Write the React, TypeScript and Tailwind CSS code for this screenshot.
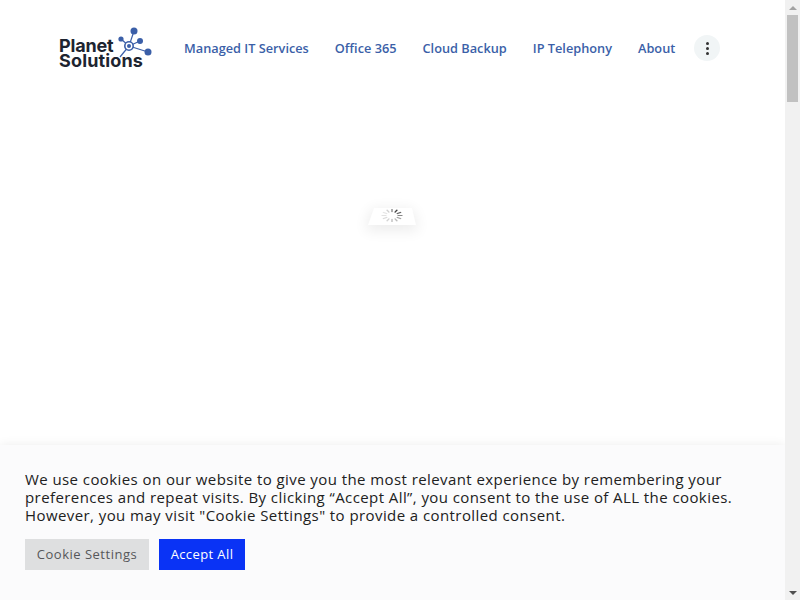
const navItems = ["Managed IT Services", "Office 365", "Cloud Backup", "IP Telephony", "About"];

const Logo = () => (
  <div className="relative h-[44px] w-[96px] font-['Inter',sans-serif] text-[#1d2430]">
    <div className="absolute left-0 top-[13px] text-[18px] leading-[14px] font-bold tracking-[-0.2px]">Planet</div>
    <div className="absolute left-0 top-[28px] text-[18px] leading-[14px] font-bold tracking-[0.15px]">Solutions</div>
    <svg className="absolute left-0 top-0" width="96" height="44" viewBox="0 0 96 44">
      <g stroke="#3b5fa8" strokeWidth="1.2" fill="none">
        <path d="M70 20 L75 5" />
        <path d="M70 20 L62 13" />
        <path d="M70 20 L81 15" />
        <path d="M70 20 L89 26" />
        <path d="M70 20 L61 31" />
      </g>
      <circle cx="70" cy="20" r="4.2" fill="#fff" stroke="#3b5fa8" strokeWidth="1.6" />
      <g fill="#3b5fa8">
        <circle cx="75" cy="5" r="3.5" />
        <circle cx="62" cy="13" r="2.6" />
        <circle cx="81" cy="15" r="3" />
        <circle cx="89" cy="26" r="3.5" />
        <circle cx="70" cy="20" r="2" />
      </g>
    </svg>
  </div>
);

const Spinner = () => {
  const shades = ["#444", "#666", "#888", "#a5a5a5", "#bbb", "#c8c8c8", "#d4d4d4", "#dcdcdc", "#e2e2e2", "#e6e6e6", "#d0d0d0", "#999"];
  return (
    <svg className="ml-[14px]" width="110" height="60" viewBox="0 0 110 60">
      <defs>
        <filter id="soft" x="-50%" y="-100%" width="200%" height="300%">
          <feGaussianBlur stdDeviation="7" />
        </filter>
      </defs>
      <polygon points="26,14 68,14 74,36 20,36" fill="#000" opacity="0.07" filter="url(#soft)" />
      <polygon points="29,13 67,13 71,30 23,30" fill="#fff" />
      <g transform="translate(47 20.5) scale(1 0.62)">
        {shades.map((c, i) => (
          <rect key={i} x="-0.8" y="-10.5" width="1.6" height="5" fill={c} transform={`rotate(${30 + i * 30})`} />
        ))}
      </g>
    </svg>
  );
};

const Scrollbar = () => (
  <div className="flex h-[600px] w-[15px] shrink-0 flex-col items-center bg-[#f1f1f1]">
    <div className="flex h-[15px] w-full items-center justify-center">
      <div className="mt-[1px] h-0 w-0 border-x-[4px] border-b-[4px] border-x-transparent border-b-[#a3a3a3]" />
    </div>
    <div className="h-[87px] w-[11px] bg-[#c1c1c1]" />
    <div className="flex-1" />
    <div className="flex h-[15px] w-full items-center justify-center">
      <div className="h-0 w-0 border-x-[4px] border-t-[4px] border-x-transparent border-t-[#505050]" />
    </div>
  </div>
);

export default function App() {
  return (
    <div className="flex h-[600px] w-[800px] overflow-hidden bg-white font-['Open_Sans',sans-serif]">
      <div className="flex h-full w-[785px] flex-col">
        <header className="flex h-[96px] items-center pl-[59px]">
          <Logo />
          <nav className="ml-[29px] flex items-center gap-[26px] pt-[1px] text-[12.75px] font-semibold text-[#3b5fa8]">
            {navItems.map((item) => (
              <a key={item} href="#">{item}</a>
            ))}
          </nav>
          <button className="ml-[19px] flex h-[26px] w-[26px] flex-col items-center justify-center gap-[2px] rounded-full bg-[#f1f5f6]">
            <span className="h-[3px] w-[3px] rounded-full bg-[#333]" />
            <span className="h-[3px] w-[3px] rounded-full bg-[#333]" />
            <span className="h-[3px] w-[3px] rounded-full bg-[#333]" />
          </button>
        </header>

        <main className="flex flex-1 justify-center pt-[99px]">
          <Spinner />
        </main>

        <section className="h-[155px] bg-[#fbfbfc] pl-[25px] pt-[25px] shadow-[0_0_10px_rgba(0,0,0,0.08)]">
          <p className="w-[740px] text-[15px] leading-[18px] tracking-[0.42px] text-[#212121]">
            We use cookies on our website to give you the most relevant experience by remembering your preferences and repeat visits. By clicking “Accept All”, you consent to the use of ALL the cookies. However, you may visit "Cookie Settings" to provide a controlled consent.
          </p>
          <div className="mt-[15px] flex gap-[10px] text-[13px] tracking-[0.5px]">
            <button className="h-[31px] w-[124px] bg-[#dedfe0] text-[#56575a]">Cookie Settings</button>
            <button className="h-[31px] w-[86px] bg-[#0a33f5] tracking-[0.4px] text-[#ffffff]">Accept All</button>
          </div>
        </section>
      </div>
      <Scrollbar />
    </div>
  );
}
